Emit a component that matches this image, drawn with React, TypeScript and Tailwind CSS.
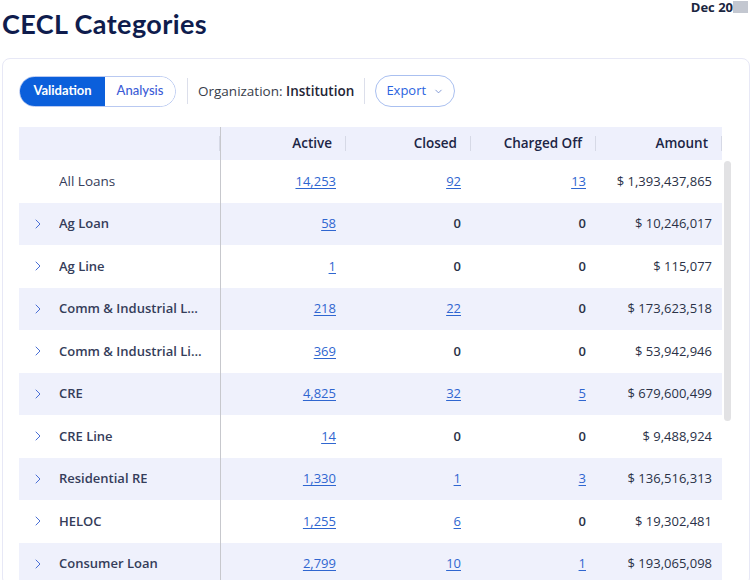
import React from 'react';
import { ChevronRight, ChevronDown } from 'lucide-react';

interface LoanRow {
  label: string;
  active: string;
  closed: string;
  chargedOff: string;
  amount: string;
  expandable: boolean;
}

const rows: LoanRow[] = [
  { label: 'All Loans', active: '14,253', closed: '92', chargedOff: '13', amount: '$ 1,393,437,865', expandable: false },
  { label: 'Ag Loan', active: '58', closed: '0', chargedOff: '0', amount: '$ 10,246,017', expandable: true },
  { label: 'Ag Line', active: '1', closed: '0', chargedOff: '0', amount: '$ 115,077', expandable: true },
  { label: 'Comm & Industrial Loan', active: '218', closed: '22', chargedOff: '0', amount: '$ 173,623,518', expandable: true },
  { label: 'Comm & Industrial Line', active: '369', closed: '0', chargedOff: '0', amount: '$ 53,942,946', expandable: true },
  { label: 'CRE', active: '4,825', closed: '32', chargedOff: '5', amount: '$ 679,600,499', expandable: true },
  { label: 'CRE Line', active: '14', closed: '0', chargedOff: '0', amount: '$ 9,488,924', expandable: true },
  { label: 'Residential RE', active: '1,330', closed: '1', chargedOff: '3', amount: '$ 136,516,313', expandable: true },
  { label: 'HELOC', active: '1,255', closed: '6', chargedOff: '0', amount: '$ 19,302,481', expandable: true },
  { label: 'Consumer Loan', active: '2,799', closed: '10', chargedOff: '1', amount: '$ 193,065,098', expandable: true },
];

const gridCols = 'grid grid-cols-[202px_125px_125px_125px_126px]';

// counts of zero are plain text, everything else links out
const CountCell: React.FC<{ value: string }> = ({ value }) => (
  <div className="flex items-center justify-end pr-[10px]">
    {value === '0' ? (
      <span className="font-semibold text-[#2a3147]">0</span>
    ) : (
      <a href="#" className="text-[#2f66d0] underline underline-offset-2 decoration-[#2f66d0]">{value}</a>
    )}
  </div>
);

const HeaderCell: React.FC<{ title: string }> = ({ title }) => (
  <div className="flex items-center justify-end">
    <span>{title}</span>
    <span className="ml-[13px] h-[15px] w-px bg-[#d6d9e6]" />
  </div>
);

export default function App() {
  return (
    <div className="h-[580px] w-[752px] overflow-hidden bg-white" style={{ fontFamily: '"Open Sans", sans-serif' }}>
      <div className="flex items-start justify-between">
        <h1 className="ml-[2px] mt-[9px] text-[27px] font-bold leading-[30px] tracking-[0.4px] text-[#0f1c4d]" style={{ fontFamily: 'Lato, sans-serif' }}>
          CECL Categories
        </h1>
        <div className="mr-[4px] flex items-center">
          <span className="text-[13px] font-bold leading-[14px] text-[#1a2540]">Dec 20</span>
          <span className="h-[12px] w-[15px] bg-[#c3c7d0]" />
        </div>
      </div>

      <div className="mx-[2px] mt-[19px] rounded-[8px] border border-[#e7e8f6] pl-[16px] pt-[16px]">
        {/* toolbar */}
        <div className="flex items-center">
          <div className="flex h-[31px] overflow-hidden rounded-full border border-[#b9c9f1] text-[13px] font-bold" style={{ fontFamily: 'Lato, sans-serif' }}>
            <button className="w-[85px] bg-[#0b5fdb] text-white">Validation</button>
            <button className="w-[70px] bg-white font-medium text-[#3b5bd6]">Analysis</button>
          </div>
          <span className="ml-[11px] h-[26px] w-px bg-[#dcdfeb]" />
          <div className="ml-[10px] text-[13.5px] text-[#383d4a]">
            Organization: <span className="font-semibold text-[#1f2536]">Institution</span>
          </div>
          <span className="ml-[10px] h-[26px] w-px bg-[#dcdfeb]" />
          <button className="ml-[10px] flex h-[32px] w-[80px] items-center justify-center gap-[7px] rounded-full border border-[#aac0f0] text-[13px] text-[#2a63e0]">
            Export
            <ChevronDown size={11} strokeWidth={1.6} className="text-[#5a78c8]" />
          </button>
        </div>

        {/* table */}
        <div className="mt-[20px] flex">
          <div className="w-[703px] text-[13px]">
            <div className={`${gridCols} h-[33px] bg-[#eef0fc] text-[13.5px] font-semibold text-[#1c2545]`}>
              <div className="flex items-center justify-end border-r border-[#c7c8cd]">
                <span className="h-[15px] w-px bg-[#d6d9e6]" />
              </div>
              <HeaderCell title="Active" />
              <HeaderCell title="Closed" />
              <HeaderCell title="Charged Off" />
              <HeaderCell title="Amount" />
            </div>
            {rows.map((row, i) => (
              <div key={row.label} className={`${gridCols} h-[42.5px] ${i % 2 === 1 ? 'bg-[#eff1fc]' : 'bg-white'}`}>
                <div className="flex items-center border-r border-[#c7c8cd] pl-[11px]">
                  <span className="flex w-[16px] justify-center">
                    {row.expandable && <ChevronRight size={16} strokeWidth={1.5} className="text-[#4a6fd6]" />}
                  </span>
                  <span className={`ml-[13px] max-w-[146px] truncate text-[#353d5a] ${row.expandable ? 'text-[13px] font-semibold' : 'text-[13.5px]'}`}>
                    {row.label}
                  </span>
                </div>
                <CountCell value={row.active} />
                <CountCell value={row.closed} />
                <CountCell value={row.chargedOff} />
                <div className="flex items-center justify-end pr-[10px] text-[#2a3147]">{row.amount}</div>
              </div>
            ))}
          </div>
          <div className="ml-[2px] pt-[34px]">
            <div className="h-[260px] w-[7px] rounded-full bg-[#e2e2e4]" />
          </div>
        </div>
      </div>
    </div>
  );
}
